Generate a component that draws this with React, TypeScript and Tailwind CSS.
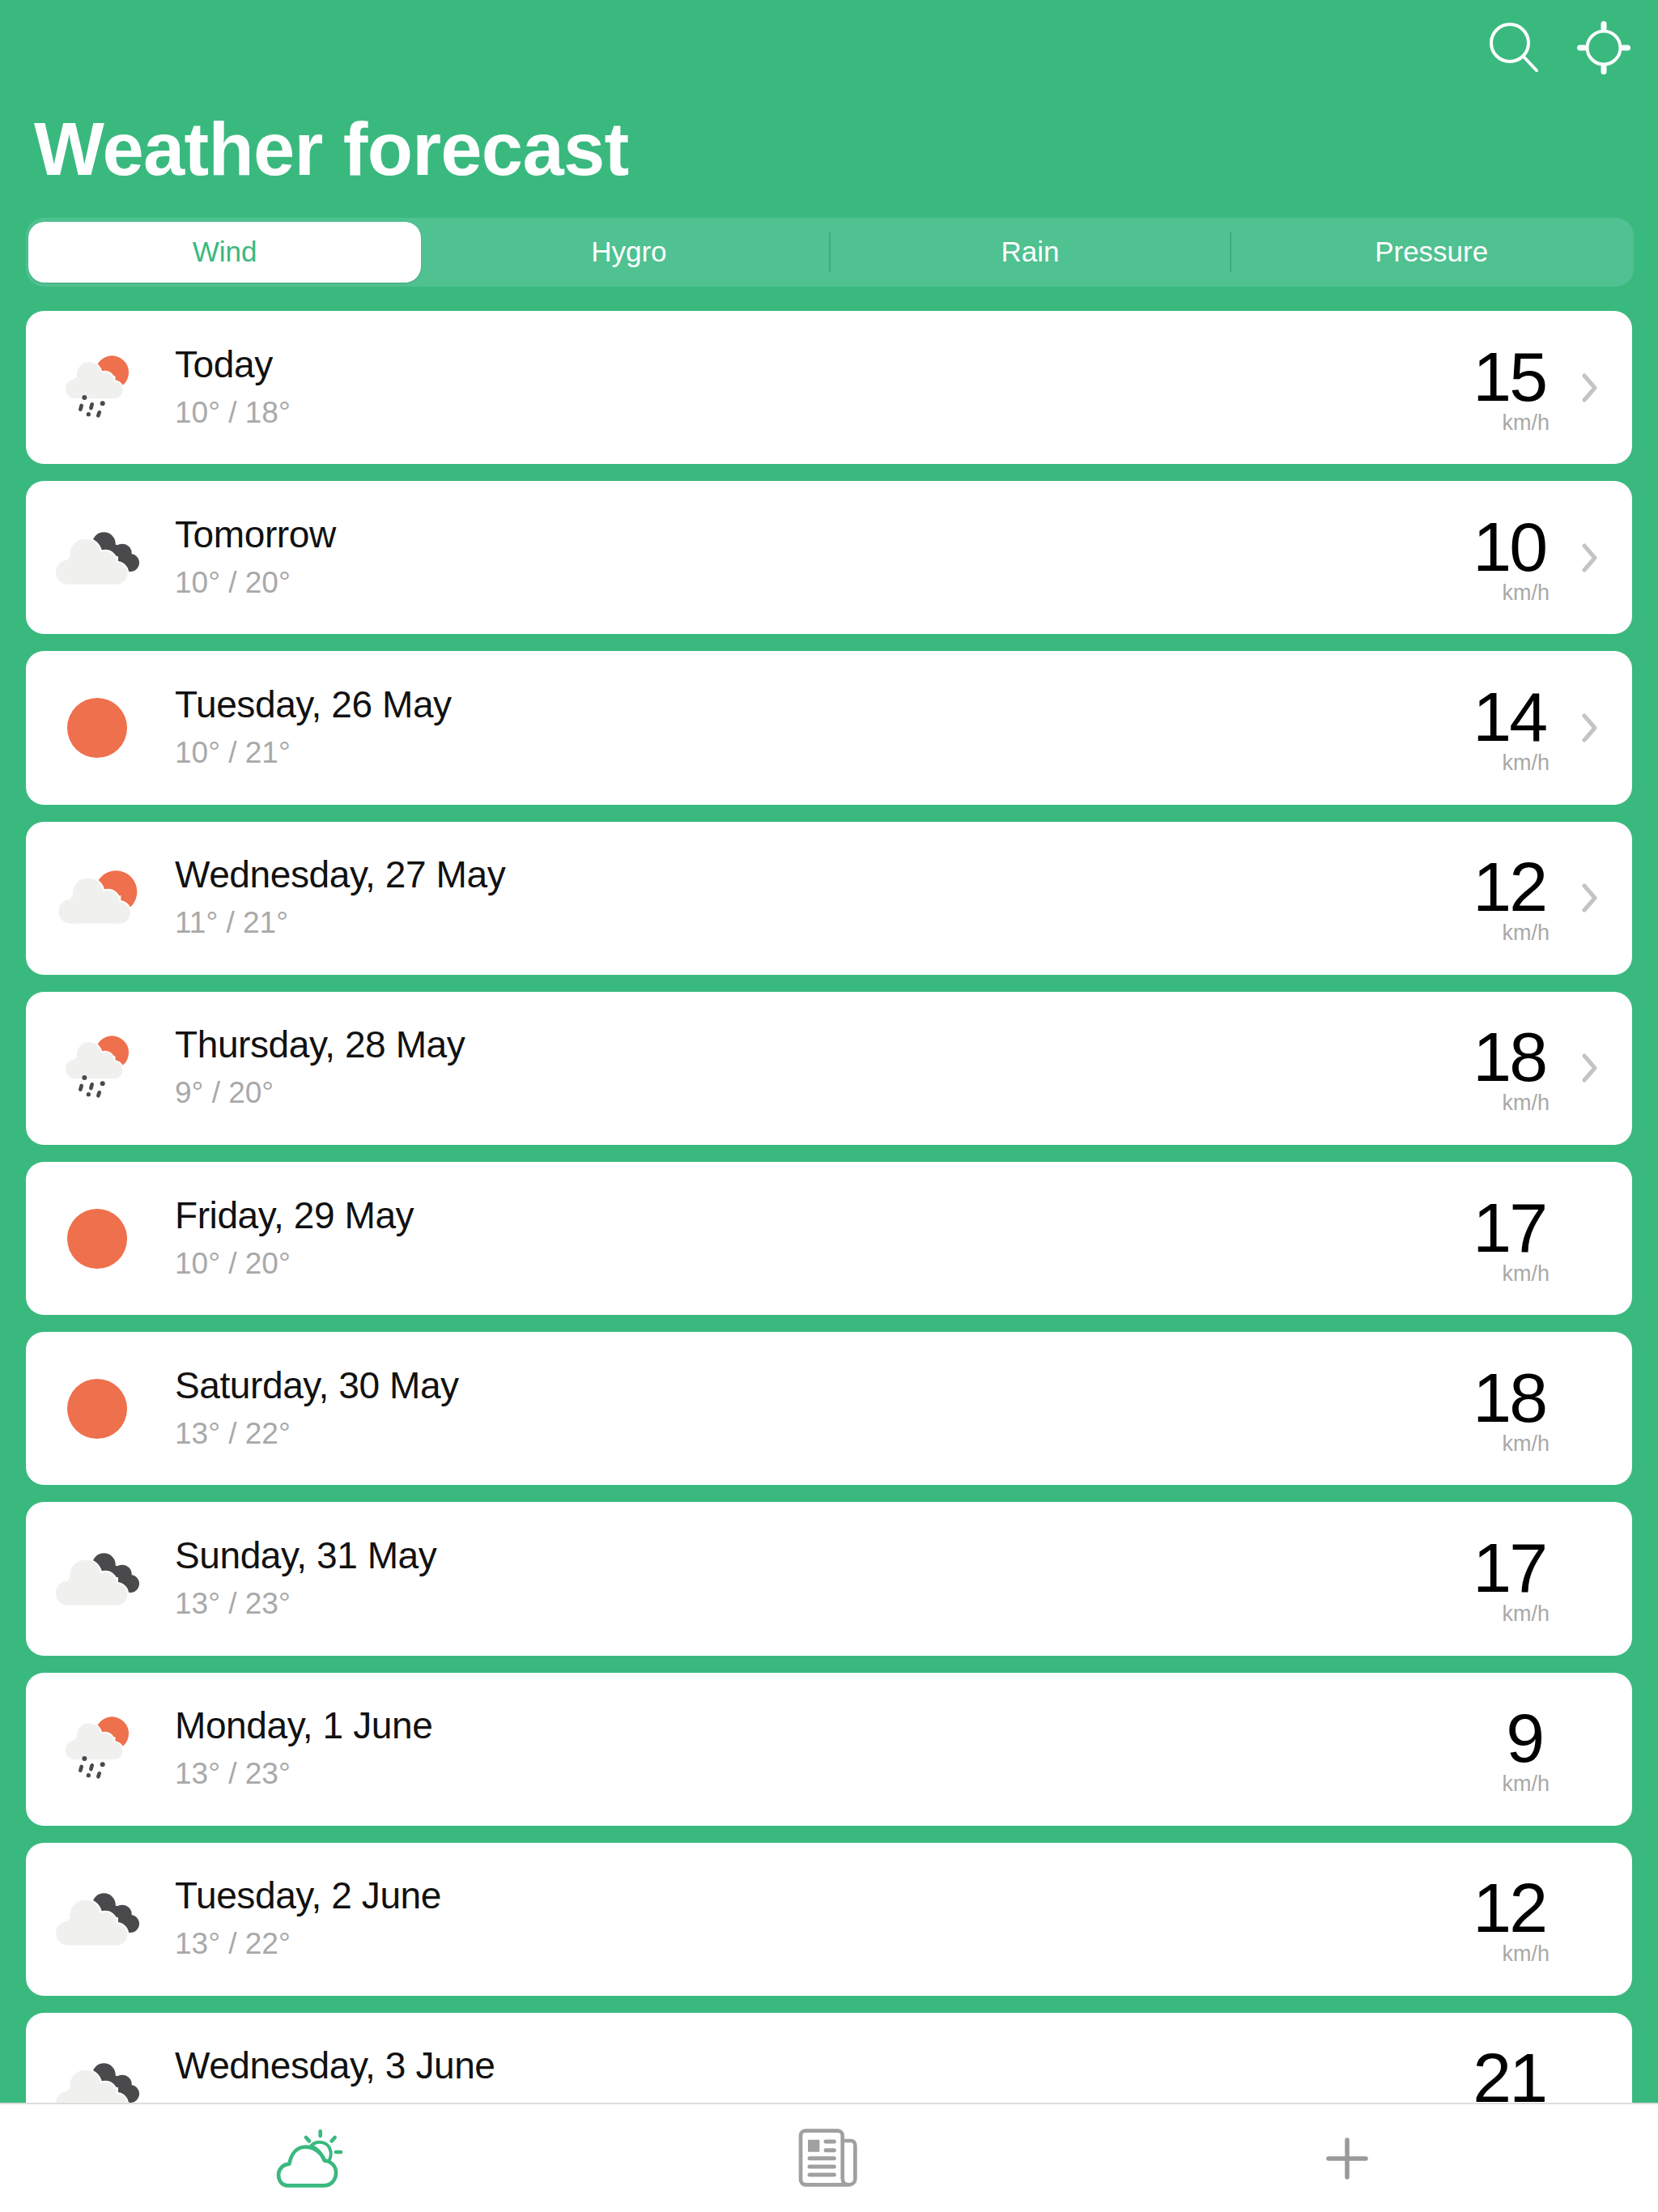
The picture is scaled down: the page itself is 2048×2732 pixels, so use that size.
import React from 'react';

type Kind = 'rain' | 'dark' | 'partly' | 'sun';

interface Day {
    name: string;
    temps: string;
    wind: string;
    kind: Kind;
    more?: boolean;
}

const days: Day[] = [
    { name: 'Today', temps: '10° / 18°', wind: '15', kind: 'rain', more: true },
    { name: 'Tomorrow', temps: '10° / 20°', wind: '10', kind: 'dark', more: true },
    { name: 'Tuesday, 26 May', temps: '10° / 21°', wind: '14', kind: 'sun', more: true },
    { name: 'Wednesday, 27 May', temps: '11° / 21°', wind: '12', kind: 'partly', more: true },
    { name: 'Thursday, 28 May', temps: '9° / 20°', wind: '18', kind: 'rain', more: true },
    { name: 'Friday, 29 May', temps: '10° / 20°', wind: '17', kind: 'sun' },
    { name: 'Saturday, 30 May', temps: '13° / 22°', wind: '18', kind: 'sun' },
    { name: 'Sunday, 31 May', temps: '13° / 23°', wind: '17', kind: 'dark' },
    { name: 'Monday, 1 June', temps: '13° / 23°', wind: '9', kind: 'rain' },
    { name: 'Tuesday, 2 June', temps: '13° / 22°', wind: '12', kind: 'dark' },
    // temps of this row are hidden behind the footer in the picture
    { name: 'Wednesday, 3 June', temps: '\u00a0', wind: '21', kind: 'dark' },
];

const tabs = ['Hygro', 'Rain', 'Pressure'];

// cloud drawn as a union of circles, halo first so it cuts into what is behind it
const CloudShape = ({ transform }: { transform: string }) => {
    const parts = (
        <>
            <circle cx="112" cy="203" r="45" />
            <circle cx="176" cy="137" r="57" />
            <circle cx="250" cy="165" r="40" />
            <circle cx="292" cy="208" r="40" />
            <rect x="112" y="150" width="180" height="98" />
        </>
    );
    return (
        <g transform={transform}>
            <g fill="#ffffff" stroke="#ffffff" strokeWidth="12">{parts}</g>
            <g fill="#f0f0ef">{parts}</g>
        </g>
    );
};

const WeatherIcon = ({ kind }: { kind: Kind }) => (
    <svg viewBox="0 0 450 360" className="w-[150px] h-[120px] shrink-0">
        {kind === 'sun' && <circle cx="210" cy="180" r="111" fill="#ee704c" />}
        {kind === 'partly' && (
            <>
                <circle cx="280" cy="157" r="78" fill="#ee704c" />
                <CloudShape transform="translate(0 27)" />
            </>
        )}
        {kind === 'dark' && (
            <>
                <g fill="#4a4a4c">
                    <circle cx="235" cy="128" r="43" />
                    <circle cx="303" cy="163" r="35" />
                    <circle cx="333" cy="198" r="33" />
                    <circle cx="270" cy="170" r="40" />
                </g>
                <CloudShape transform="translate(-10 30)" />
            </>
        )}
        {kind === 'rain' && (
            <>
                <circle cx="265" cy="123" r="62" fill="#ee704c" />
                <CloudShape transform="translate(39 21) scale(0.8)" />
                <g fill="#4a4a4c">
                    <circle cx="163" cy="216" r="9" />
                    <circle cx="230" cy="238" r="9" />
                    <circle cx="178" cy="278" r="8" />
                </g>
                <g stroke="#4a4a4c" strokeWidth="14" strokeLinecap="round">
                    <line x1="152" y1="246" x2="148" y2="260" />
                    <line x1="191" y1="241" x2="187" y2="255" />
                    <line x1="218" y1="271" x2="214" y2="283" />
                </g>
            </>
        )}
    </svg>
);

const DayRow = ({ day }: { day: Day }) => (
    <div className="flex items-center h-[189.2px] shrink-0 rounded-[22px] bg-white pl-[18px] pr-[43px]">
        <WeatherIcon kind={day.kind} />
        <div className="ml-[16px] flex flex-col pb-[4px]">
            <span className="text-[46px] leading-[56px] tracking-[-0.4px] text-[#111111]">{day.name}</span>
            <span className="mt-[10px] text-[37px] leading-[44px] text-[#a9a9a9]">{day.temps}</span>
        </div>
        <div className="ml-auto flex flex-col items-end">
            <span className={`text-[86px] leading-[88px] tracking-[-3px] text-black ${day.wind.length === 1 ? 'pr-[9px]' : 'pr-[5px]'}`}>{day.wind}</span>
            <span className="-mt-[2px] text-[27px] leading-[30px] text-[#a9a9a9]">km/h</span>
        </div>
        <div className="ml-[40px] w-[19px] shrink-0">
            {day.more && (
                <svg viewBox="0 0 19 36" className="w-[19px] h-[36px]">
                    <path d="M3 3 L16 18 L3 33" fill="none" stroke="#c4c4c4" strokeWidth="5" strokeLinecap="round" strokeLinejoin="round" />
                </svg>
            )}
        </div>
    </div>
);

export default function App() {
    return (
        <div className="flex flex-col w-[2048px] h-[2732px] overflow-hidden bg-[#3ab97f] font-['Liberation_Sans',sans-serif]">
            <div className="flex justify-end gap-[46px] pt-[26px] pr-[34px]">
                <svg viewBox="0 0 64 66" className="w-[64px] h-[66px]" fill="none" stroke="#ffffff" strokeLinecap="round">
                    <circle cx="27" cy="27" r="23" strokeWidth="4" />
                    <line x1="44" y1="44" x2="60" y2="61" strokeWidth="4" />
                </svg>
                <svg viewBox="0 0 66 66" className="w-[66px] h-[66px]" fill="none" stroke="#ffffff" strokeLinecap="round">
                    <circle cx="33" cy="33" r="20.5" strokeWidth="4" />
                    <path d="M33 3.5 V9 M33 57 V62.5 M3.5 33 H9 M57 33 H62.5" strokeWidth="7" />
                </svg>
            </div>
            <h1 className="mt-[42px] pl-[42px] text-[92px] leading-[100px] tracking-[-0.65px] font-bold text-white">Weather forecast</h1>
            <div className="mt-[35px] ml-[32px] mr-[30px] flex items-center h-[85px] px-[3px] rounded-[22px] bg-[#50c190]">
                <div className="w-[495px] pr-[10px] shrink-0">
                    <div className="flex items-center justify-center h-[75px] rounded-[20px] bg-white text-[35px] text-[#3ab97f] shadow-sm">Wind</div>
                </div>
                {tabs.map((tab, idx) => (
                    <React.Fragment key={tab}>
                        {idx > 0 && <div className="w-[2px] h-[49px] shrink-0 bg-[#3fa97d]" />}
                        <div className="flex-1 text-center text-[35px] text-white">{tab}</div>
                    </React.Fragment>
                ))}
            </div>
            <div className="mt-[30px] flex-1 min-h-0 overflow-hidden flex flex-col gap-[21px] px-[32px]">
                {days.map(day => <DayRow key={day.name} day={day} />)}
            </div>
            <div className="shrink-0 h-[135px] border-t-2 border-[#dddddd] bg-white">
                <div className="grid grid-cols-3 w-[1920px] h-full mx-auto place-items-center">
                    <svg viewBox="0 0 330 300" className="w-[110px] h-[100px] mt-[9px]" fill="none" stroke="#3ab97f" strokeLinecap="round" strokeLinejoin="round">
                        <path d="M78 238 H215 C243 238 258 214 258 190 C258 165 240 148 215 145 C205 115 175 95 145 95 C113 95 92 120 85 158 C60 160 45 178 45 198 C45 222 60 238 78 238 Z" strokeWidth="14" />
                        <path d="M165 92 C175 78 198 72 217 82 C238 93 246 120 232 147 M165 92 C190 97 205 122 215 145" strokeWidth="12" />
                        <path d="M147 60 L159 73 M200 37 V54 M254 60 L242 73 M258 114 H276" strokeWidth="14" />
                    </svg>
                    <svg viewBox="0 0 330 300" className="w-[110px] h-[100px] mt-[9px]" fill="none" stroke="#a0a0a0" strokeLinecap="round" strokeLinejoin="round">
                        <path d="M238 235 H80 C68 235 60 227 60 215 V52 C60 42 68 35 80 35 H195 C207 35 215 42 215 52 V212 C215 226 225 235 238 235 C252 235 262 225 262 212 V90 C262 78 255 72 245 72 H215" strokeWidth="14" />
                        <rect x="87" y="68" width="43" height="45" rx="3" fill="#a0a0a0" stroke="none" />
                        <path d="M153 75 H184 M153 107 H184 M93 137 H184 M93 168 H184 M93 198 H184" strokeWidth="15" />
                    </svg>
                    <svg viewBox="0 0 52 52" className="w-[52px] h-[52px]" fill="none" stroke="#999999" strokeWidth="5.5" strokeLinecap="round">
                        <path d="M26 3 V49 M3 26 H49" />
                    </svg>
                </div>
            </div>
        </div>
    );
}
